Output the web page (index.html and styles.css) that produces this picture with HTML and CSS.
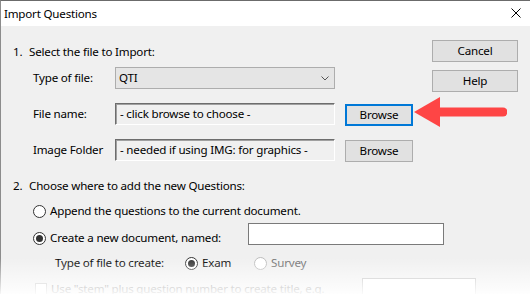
FILE: index.html
```html
<!DOCTYPE html>
<html lang="en">
<head>
    <meta charset="UTF-8">
    <title>Import Questions</title>
    <link rel="stylesheet" href="styles.css">
</head>
<body>
    <div class="window">
        <div class="titlebar">
            <span class="title">Import Questions</span>
            <svg class="close" width="10" height="10" viewBox="0 0 10 10">
                <path d="M0.5 0.5 L9.5 9.5 M9.5 0.5 L0.5 9.5" stroke="#000" stroke-width="1" fill="none"/>
            </svg>
        </div>

        <div class="dialog-body">
            <div class="top">
                <div class="section">
                    <p class="step"><span class="num">1.</span>Select the file to Import:</p>
                    <div class="form-grid">
                        <label>Type of file:</label>
                        <div class="select">
                            <span>QTI</span>
                            <svg width="8" height="5" viewBox="0 0 8 5">
                                <path d="M0.5 0.5 L4 4 L7.5 0.5" stroke="#555" stroke-width="1" fill="none"/>
                            </svg>
                        </div>
                        <span></span>

                        <label>File name:</label>
                        <div class="field">- click browse to choose -</div>
                        <button class="btn focused">Browse</button>

                        <label>Image Folder</label>
                        <div class="field">- needed if using IMG: for graphics -</div>
                        <button class="btn">Browse</button>
                    </div>
                </div>
                <div class="actions">
                    <button class="btn">Cancel</button>
                    <button class="btn">Help</button>
                </div>
            </div>

            <p class="step step-two"><span class="num">2.</span>Choose where to add the new Questions:</p>

            <div class="option">
                <span class="radio"></span>
                <span>Append the questions to the current document.</span>
            </div>
            <div class="option named">
                <span class="radio checked"></span>
                <span class="named-label">Create a new document, named:</span>
                <span class="textbox doc-name"></span>
            </div>
            <div class="filetype">
                <span class="filetype-label">Type of file to create:</span>
                <span class="choice"><span class="radio checked"></span>Exam</span>
                <span class="choice disabled"><span class="radio"></span>Survey</span>
            </div>
            <div class="stem">
                <span class="checkbox"></span>
                <span class="stem-label">Use "stem" plus question number to create title, e.g.</span>
                <span class="textbox stem-box"></span>
            </div>
        </div>

        <div class="fade"></div>

        <svg class="arrow" width="100" height="34" viewBox="0 0 100 34">
            <line x1="30" y1="17" x2="96" y2="17" stroke="#fe4545" stroke-width="9" stroke-linecap="round"/>
            <polygon points="7,17 33,2 33,32" fill="#fe4545"/>
        </svg>
    </div>
</body>
</html>
```

FILE: styles.css
```css
:root {
    --face: #f0f0f0;
    --btn-face: #e1e1e1;
    --btn-border: #adadad;
    --focus: #0078d7;
    --text: #000;
}

* {
    margin: 0;
    padding: 0;
    box-sizing: border-box;
}

body {
    font-family: 'Noto Sans', 'Open Sans', sans-serif;
    font-size: 11.6px;
    letter-spacing: -0.2px;
    line-height: 16px;
    color: var(--text);
    background: #fff;
    width: 530px;
    height: 294px;
    overflow: hidden;
}

.window {
    position: relative;
    width: 530px;
    height: 294px;
    border-top: 1px solid #6b6b6b;
    border-left: 1px solid #8c8c8c;
    background: var(--face);
}

.titlebar {
    height: 25px;
    background: #fff;
    display: flex;
    align-items: center;
    justify-content: space-between;
    padding: 0 9px 0 3px;
}

.close {
    display: block;
    margin-top: -2px;
}

.dialog-body {
    padding: 18px 0 0 12px;
}

.top {
    display: flex;
    justify-content: space-between;
}

.step {
    display: flex;
}

.num {
    width: 16px;
}

.form-grid {
    display: grid;
    grid-template-columns: 72px 220px 68px;
    grid-auto-rows: 22px;
    column-gap: 10px;
    row-gap: 14px;
    align-items: center;
    padding-left: 20px;
    margin-top: 7px;
}

.select {
    height: 22px;
    display: flex;
    align-items: center;
    justify-content: space-between;
    padding: 0 5px 0 3px;
    background: #e5e5e5;
    border: 1px solid var(--btn-border);
}

.field {
    height: 22px;
    padding: 2px 0 0 4px;
    background: var(--face);
    border-top: 1px solid #6d6d6d;
    border-left: 1px solid #6d6d6d;
    border-bottom: 1px solid #fff;
    border-right: 1px solid #fff;
    box-shadow: inset 1px 1px 0 #a0a0a0;
    white-space: nowrap;
    overflow: hidden;
}

.btn {
    height: 22px;
    font: inherit;
    letter-spacing: inherit;
    color: var(--text);
    background: var(--btn-face);
    border: 1px solid var(--btn-border);
}

.form-grid .btn {
    margin-top: 2px;
}

.btn.focused {
    border: 2px solid var(--focus);
}

.actions {
    display: flex;
    flex-direction: column;
    gap: 8px;
    width: 86px;
    margin: -4px 12px 0 0;
}

.step-two {
    margin-top: 17px;
}

.option {
    display: flex;
    align-items: center;
    padding-left: 20px;
    margin-top: 9px;
}

.radio {
    width: 13px;
    height: 13px;
    border: 1px solid #333;
    border-radius: 50%;
    background: #fff;
    margin-right: 4px;
    display: flex;
    align-items: center;
    justify-content: center;
    flex-shrink: 0;
}

.radio.checked::after {
    content: "";
    width: 7px;
    height: 7px;
    border-radius: 50%;
    background: #333;
}

.named {
    align-items: flex-start;
    margin-top: 4px;
    height: 22px;
}

.named .radio {
    margin-top: 9px;
}

.named-label {
    margin-top: 7px;
    width: 198px;
}

.textbox {
    display: block;
    height: 22px;
    background: #fff;
    border: 1px solid #7a7a7a;
}

.doc-name {
    width: 196px;
}

.filetype {
    display: flex;
    align-items: center;
    padding-left: 42px;
    margin-top: 10px;
}

.filetype-label {
    width: 130px;
}

.choice {
    display: flex;
    align-items: center;
    width: 69px;
}

.choice.disabled {
    color: #6d6d6d;
}

.choice.disabled .radio {
    border-color: #bcbcbc;
}

.stem {
    display: flex;
    align-items: center;
    padding-left: 22px;
    margin-top: 7px;
    color: #6d6d6d;
}

.checkbox {
    width: 12px;
    height: 12px;
    border: 1px solid #bcbcbc;
    background: #fff;
    margin-right: 4px;
}

.stem-label {
    width: 311px;
}

.stem-box {
    width: 114px;
    border-color: #bcbcbc;
}

/* fade-out over the cut-off bottom of the dialog */
.fade {
    position: absolute;
    left: -1px;
    right: 0;
    bottom: 0;
    height: 36px;
    background: linear-gradient(to bottom, rgba(255,255,255,0), rgba(255,255,255,0.92));
}

.arrow {
    position: absolute;
    left: 406px;
    top: 94px;
}
```
